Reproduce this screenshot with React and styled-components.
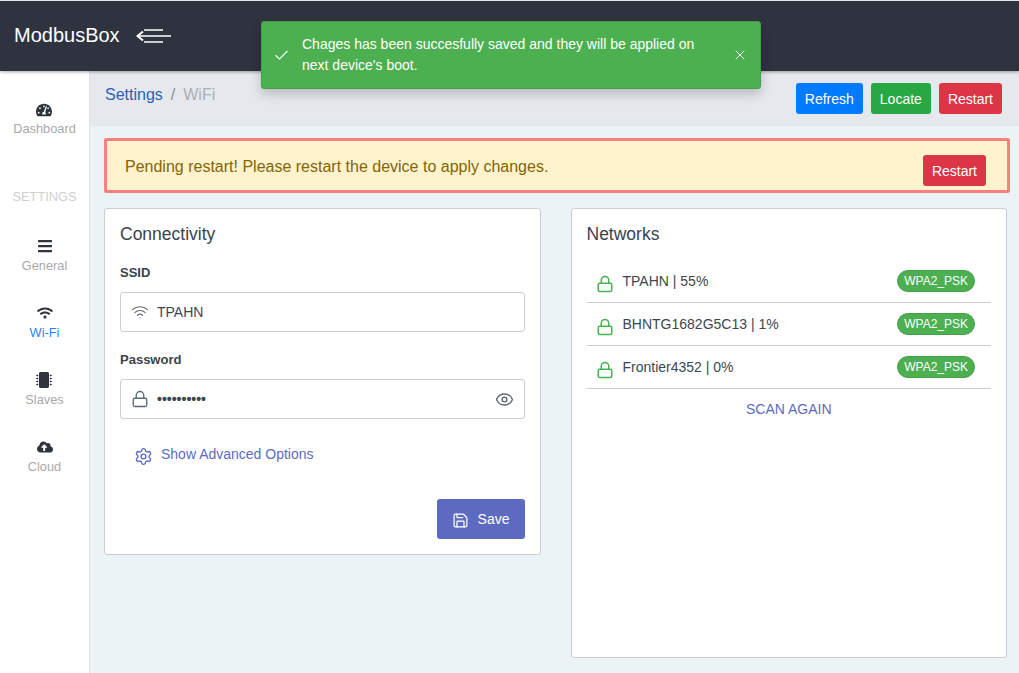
import React from 'react';
import styled, { createGlobalStyle } from 'styled-components';
import { Check, X, Wifi, Lock, Eye, Settings, Save } from 'lucide-react';
import { FaTachometerAlt, FaBars, FaWifi, FaMicrochip, FaCloudUploadAlt } from 'react-icons/fa';

const GlobalStyle = createGlobalStyle`
  html, body {
    margin: 0;
    padding: 0;
    height: 100%;
    overflow: hidden;
    background: #ecf3f7;
    font-family: "Liberation Sans", Arial, sans-serif;
    color: #2f353a;
  }
  * { box-sizing: border-box; }
`;

const Page = styled.div`
  position: relative;
  width: 1019px;
  height: 673px;
  overflow: hidden;
`;

const Header = styled.header`
  display: flex;
  align-items: center;
  height: 71px;
  padding: 0 0 1px 14px;
  border-top: 1px solid #e8e8e8;
  background: #2f3340;
  box-shadow: 0 1px 3px rgba(0, 0, 0, 0.35);
  position: relative;
  z-index: 2;
`;

const Brand = styled.div`
  font-size: 20px;
  color: #fff;
  margin-right: 16px;
`;

const Body = styled.div`
  display: flex;
  height: 602px;
`;

const Sidebar = styled.nav`
  width: 90px;
  flex-shrink: 0;
  background: #fff;
  border-right: 1px solid #dde4e8;
  display: flex;
  flex-direction: column;
  align-items: center;
  padding-top: 31px;
`;

const NavItem = styled.div`
  display: flex;
  flex-direction: column;
  align-items: center;
  height: 67px;
  font-size: 12.8px;
  line-height: 18px;
  color: ${(p) => (p.$active ? '#1f86ff' : '#a9a9a9')};
  svg {
    color: #2f353a;
    font-size: 16px;
    margin-bottom: ${(p) => p.$iconGap ?? 3}px;
    display: block;
  }
`;

const NavTitle = styled.div`
  font-size: 12.8px;
  line-height: 18px;
  color: #cfcfcf;
  margin: 19px 0 32px;
`;

const Main = styled.main`
  flex: 1;
  min-width: 0;
`;

const Crumbs = styled.div`
  display: flex;
  justify-content: space-between;
  height: 55px;
  padding: 12px 17px 0 15px;
  background: #e5e8ec;
`;

const CrumbTrail = styled.div`
  padding-top: 1px;
  font-size: 16px;
  line-height: 22px;
  color: #a9afb5;
  a {
    color: #2a62b8;
  }
  span {
    margin: 0 8px;
    color: #8a9096;
  }
`;

const ButtonRow = styled.div`
  display: flex;
  gap: 8px;
`;

const SmallButton = styled.button`
  height: 31px;
  padding: 0 9px;
  border: 0;
  border-radius: 3px;
  background: ${(p) => p.$bg};
  color: #fff;
  font: 14px "Liberation Sans", Arial, sans-serif;
`;

const Content = styled.div`
  padding: 12px 9px 0 14px;
`;

const Alert = styled.div`
  display: flex;
  justify-content: space-between;
  height: 55px;
  padding: 14px 21px 0 18px;
  border: 3px solid #ff7f7f;
  border-radius: 2px;
  background: #fff3cd;
  color: #856404;
  font-size: 16px;
  line-height: 18px;
`;

const AlertText = styled.span`
  margin-top: 3px;
`;

const Columns = styled.div`
  display: flex;
  gap: 30px;
  margin-top: 15px;
  padding-right: 3px;
  align-items: flex-start;
`;

const Card = styled.section`
  flex: 1;
  height: ${(p) => p.$height}px;
  padding: 15px;
  background: #fff;
  border: 1px solid #c8ced3;
  border-radius: 3px;
`;

const CardTitle = styled.h2`
  margin: 0 0 ${(p) => p.$gap}px;
  font-size: 17.5px;
  font-weight: 400;
  line-height: 21px;
  color: #3a4350;
`;

const FieldGroup = styled.div`
  margin-bottom: 20px;
`;

const Label = styled.label`
  display: block;
  font-size: 13px;
  font-weight: 700;
  line-height: 16px;
  margin-bottom: 11px;
  color: #3a4350;
`;

const Field = styled.div`
  display: flex;
  align-items: center;
  height: 40px;
  padding: 0 10px;
  border: 1px solid #c8ced3;
  border-radius: 3px;
  font-size: 14px;
  svg {
    color: #5c6873;
    flex-shrink: 0;
  }
`;

const FieldText = styled.span`
  flex: 1;
  margin-left: 8px;
  color: #3e4650;
`;

const Dots = styled(FieldText)`
  font-weight: 700;
`;

const AdvancedLink = styled.div`
  display: flex;
  align-items: flex-start;
  gap: 8px;
  margin: 26px 0 0 14px;
  font-size: 14px;
  line-height: 18px;
  color: #5c6bc0;
  svg {
    margin-top: 2px;
  }
`;

const SaveRow = styled.div`
  display: flex;
  justify-content: flex-end;
  margin-top: 33px;
`;

const SaveButton = styled.button`
  display: flex;
  align-items: center;
  gap: 9px;
  height: 40px;
  padding: 0 15px;
  border: 0;
  border-radius: 3px;
  background: #5c6bc0;
  color: #fff;
  font: 14px "Liberation Sans", Arial, sans-serif;
  svg {
    margin-top: 3px;
  }
`;

const NetworkList = styled.ul`
  list-style: none;
  margin: 0;
  padding: 0;
`;

const NetworkRow = styled.li`
  display: flex;
  align-items: center;
  height: 43px;
  padding: 0 16px 0 9px;
  border-bottom: 1px solid #c8ced3;
  font-size: 14px;
  color: #3e4650;
  svg {
    color: #4caf50;
    margin-top: 5px;
    margin-right: 9px;
  }
`;

const NetworkName = styled.span`
  flex: 1;
  padding-bottom: 1px;
`;

const Pill = styled.span`
  height: 22px;
  padding: 0 6px;
  border: 1px solid #43a047;
  border-radius: 11px;
  background: #4caf50;
  color: #fff;
  font-size: 12px;
  line-height: 20px;
`;

const ScanLink = styled.div`
  margin-top: 12px;
  text-align: center;
  font-size: 14px;
  line-height: 16px;
  color: #5c6bc0;
`;

const Toast = styled.div`
  position: absolute;
  top: 21px;
  left: 261px;
  z-index: 3;
  display: flex;
  align-items: center;
  width: 500px;
  height: 68px;
  padding: 0 12px 0 11px;
  background: #4caf50;
  border: 1px solid #43a047;
  border-radius: 3px;
  box-shadow: 0 5px 12px rgba(0, 0, 0, 0.2);
  color: #fff;
  font-size: 14px;
  line-height: 21px;
`;

const ToastText = styled.div`
  flex: 1;
  margin: 0 26px 0 12px;
`;

// menu arrow in the header, three bars with a left pointing head
const MenuArrow = () => (
  <svg width="36" height="16" viewBox="0 0 36 16" fill="none" stroke="#fff" strokeWidth="1.7">
    <path d="M8 2h19M1 8h34M8 14h19" />
    <path d="M7 3.5 1.5 8 7 12.5" strokeWidth="2" />
  </svg>
);

const networks = [
  'TPAHN | 55%',
  'BHNTG1682G5C13 | 1%',
  'Frontier4352 | 0%',
];

export default function App() {
  return (
    <Page>
      <GlobalStyle />
      <Header>
        <Brand>ModbusBox</Brand>
        <MenuArrow />
      </Header>
      <Toast>
        <Check size={17} strokeWidth={1.5} />
        <ToastText>
          Chages has been succesfully saved and they will be applied on next device's boot.
        </ToastText>
        <X size={16} strokeWidth={1.5} />
      </Toast>
      <Body>
        <Sidebar>
          <NavItem $iconGap={2}><FaTachometerAlt />Dashboard</NavItem>
          <NavTitle>SETTINGS</NavTitle>
          <NavItem><FaBars />General</NavItem>
          <NavItem $active><FaWifi />Wi-Fi</NavItem>
          <NavItem><FaMicrochip />Slaves</NavItem>
          <NavItem><FaCloudUploadAlt />Cloud</NavItem>
        </Sidebar>
        <Main>
          <Crumbs>
            <CrumbTrail>
              <a>Settings</a>
              <span>/</span>
              WiFi
            </CrumbTrail>
            <ButtonRow>
              <SmallButton $bg="#007bff">Refresh</SmallButton>
              <SmallButton $bg="#28a745">Locate</SmallButton>
              <SmallButton $bg="#dc3545">Restart</SmallButton>
            </ButtonRow>
          </Crumbs>
          <Content>
            <Alert>
              <AlertText>Pending restart! Please restart the device to apply changes.</AlertText>
              <SmallButton $bg="#dc3545">Restart</SmallButton>
            </Alert>
            <Columns>
              <Card $height={347}>
                <CardTitle $gap={20}>Connectivity</CardTitle>
                <FieldGroup>
                  <Label>SSID</Label>
                  <Field>
                    <Wifi size={18} strokeWidth={1.5} />
                    <FieldText>TPAHN</FieldText>
                  </Field>
                </FieldGroup>
                <Label>Password</Label>
                <Field>
                  <Lock size={18} strokeWidth={1.75} />
                  <Dots>••••••••••</Dots>
                  <Eye size={19} strokeWidth={1.75} />
                </Field>
                <AdvancedLink>
                  <Settings size={19} strokeWidth={1.75} />
                  Show Advanced Options
                </AdvancedLink>
                <SaveRow>
                  <SaveButton>
                    <Save size={17} strokeWidth={1.75} />
                    Save
                  </SaveButton>
                </SaveRow>
              </Card>
              <Card $height={450}>
                <CardTitle $gap={15}>Networks</CardTitle>
                <NetworkList>
                  {networks.map((name) => (
                    <NetworkRow key={name}>
                      <Lock size={18} strokeWidth={2} />
                      <NetworkName>{name}</NetworkName>
                      <Pill>WPA2_PSK</Pill>
                    </NetworkRow>
                  ))}
                </NetworkList>
                <ScanLink>SCAN AGAIN</ScanLink>
              </Card>
            </Columns>
          </Content>
        </Main>
      </Body>
    </Page>
  );
}
